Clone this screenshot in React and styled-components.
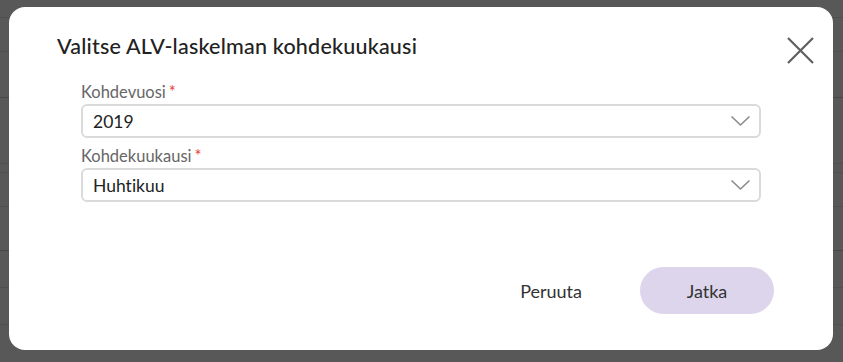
import React, { useState } from 'react';
import styled, { createGlobalStyle } from 'styled-components';

const GlobalStyle = createGlobalStyle`
  html, body {
    margin: 0;
    padding: 0;
    height: 100%;
  }
  body {
    font-family: Lato, 'Open Sans', sans-serif;
    font-variant-ligatures: none;
    background: #595959;
  }
  #root {
    height: 100%;
  }
`;

const Backdrop = styled.div`
  position: relative;
  width: 843px;
  height: 362px;
  overflow: hidden;
  background: #585858;
`;

const Rows = styled.div`
  display: flex;
  flex-direction: column;
`;

const Row = styled.div`
  height: ${(p) => p.h}px;
  box-sizing: border-box;
  border-bottom: 1px solid ${(p) => (p.dark ? '#474747' : '#4f4f4f')};
`;

const Dialog = styled.div`
  position: absolute;
  left: 9px;
  top: 7px;
  width: 824px;
  height: 343px;
  box-sizing: border-box;
  background: #fff;
  border-radius: 16px;
  padding: 26px 0 0 48px;
  display: flex;
  flex-direction: column;
`;

const Title = styled.h2`
  margin: 0;
  font-size: 21.5px;
  font-weight: 500;
  color: #222;
  letter-spacing: 0.2px;
`;

const CloseButton = styled.button`
  position: absolute;
  top: 29px;
  right: 18px;
  width: 29px;
  height: 29px;
  padding: 0;
  border: none;
  background: none;
  cursor: pointer;
  display: flex;
  align-items: center;
  justify-content: center;
`;

const Form = styled.div`
  margin: 23px 0 0 24px;
  width: 680px;
  display: flex;
  flex-direction: column;
`;

const Field = styled.div`
  display: flex;
  flex-direction: column;
  margin-bottom: 8px;
`;

const Label = styled.label`
  font-size: 16.5px;
  color: #666;
  line-height: 20px;
  margin-bottom: 2px;
`;

const Required = styled.span`
  color: #e8433a;
  margin-left: 3px;
`;

const SelectBox = styled.div`
  position: relative;
  height: 34px;
  box-sizing: border-box;
  border: 2px solid #dadada;
  border-radius: 6px;
  display: flex;
  align-items: center;
  padding: 0 10px;
  font-size: 17.5px;
  color: #222;
  cursor: pointer;
`;

const Chevron = styled.svg`
  position: absolute;
  right: 8px;
  top: 50%;
  transform: translateY(-50%);
`;

const Footer = styled.div`
  margin-top: auto;
  margin-bottom: 36px;
  margin-right: 59px;
  display: flex;
  justify-content: flex-end;
  align-items: center;
  gap: 58px;
`;

const TextButton = styled.button`
  border: none;
  background: none;
  font-family: inherit;
  font-size: 18px;
  color: #333;
  cursor: pointer;
  padding: 0;
`;

const PrimaryButton = styled.button`
  width: 134px;
  height: 47px;
  border: none;
  border-radius: 24px;
  background: #ddd5ec;
  font-family: inherit;
  font-size: 18px;
  color: #333;
  cursor: pointer;
`;

const rows = [
  [18, false],
  [34, false],
  [46, true],
  [66, false],
  [9, false],
  [34, false],
  [44, true],
  [37, false],
  [37, false],
];

const Select = ({ label, value }) => (
  <Field>
    <Label>
      {label}
      <Required>*</Required>
    </Label>
    <SelectBox>
      {value}
      <Chevron width="21" height="12" viewBox="0 0 21 12">
        <path d="M1.5 1.5 L10.5 10 L19.5 1.5" fill="none" stroke="#8a8a8a" strokeWidth="1.6" />
      </Chevron>
    </SelectBox>
  </Field>
);

const App = () => {
  const [open, setOpen] = useState(true);

  return (
    <>
      <GlobalStyle />
      <Backdrop>
        <Rows>
          {rows.map(([h, dark], i) => (
            <Row key={i} h={h} dark={dark} />
          ))}
        </Rows>
        {open && (
          <Dialog>
            <Title>Valitse ALV-laskelman kohdekuukausi</Title>
            <CloseButton onClick={() => setOpen(false)}>
              <svg width="27" height="27" viewBox="0 0 27 27">
                <path d="M1 1 L26 26 M26 1 L1 26" stroke="#5f5f5f" strokeWidth="2.2" />
              </svg>
            </CloseButton>
            <Form>
              <Select label="Kohdevuosi" value="2019" />
              <Select label="Kohdekuukausi" value="Huhtikuu" />
            </Form>
            <Footer>
              <TextButton onClick={() => setOpen(false)}>Peruuta</TextButton>
              <PrimaryButton>Jatka</PrimaryButton>
            </Footer>
          </Dialog>
        )}
      </Backdrop>
    </>
  );
};

export default App;
